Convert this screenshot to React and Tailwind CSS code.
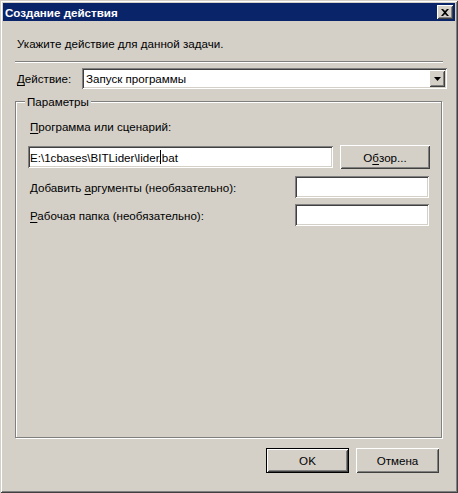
import React from 'react'

const raised =
  'bg-[#d4d0c8] shadow-[inset_1px_1px_0_#ffffff,inset_-1px_-1px_0_#404040,inset_2px_2px_0_#d4d0c8,inset_-2px_-2px_0_#808080]'
const sunken =
  'bg-white shadow-[inset_1px_1px_0_#808080,inset_-1px_-1px_0_#ffffff,inset_2px_2px_0_#404040,inset_-2px_-2px_0_#d4d0c8]'

function U({ children }) {
  return <span className="underline underline-offset-[2px] decoration-1">{children}</span>
}

function Field({ className = '', children }) {
  return <div className={`${sunken} h-[22px] flex items-center px-[3px] ${className}`}>{children}</div>
}

function Button({ children, isDefault, className = '' }) {
  return (
    <div
      className={`${className} flex items-center justify-center ${
        isDefault ? 'border border-black' : ''
      }`}
    >
      <div className={`${raised} w-full h-full flex items-center justify-center`}>{children}</div>
    </div>
  )
}

export default function App() {
  return (
    <div
      className="w-[458px] h-[493px] bg-[#d4d0c8] p-[3px] text-[11.6px] leading-[15px] text-black shadow-[inset_1px_1px_0_#d4d0c8,inset_-1px_-1px_0_#404040,inset_2px_2px_0_#ffffff,inset_-2px_-2px_0_#808080]"
      style={{ fontFamily: '"Liberation Sans", Arial, sans-serif' }}
    >
      {/* title bar */}
      <div className="h-[18px] bg-[#0a246a] flex items-center justify-between pl-[2px] pr-[2px]">
        <span className="text-white font-bold text-[11.6px]">Создание действия</span>
        <div className={`${raised} w-[16px] h-[14px] flex items-center justify-center`}>
          <svg width="8" height="7" viewBox="0 0 8 7">
            <path d="M0 0h2l2 2 2-2h2L5 3.5 8 7H6L4 5 2 7H0l3-3.5z" fill="#000" />
          </svg>
        </div>
      </div>

      <div className="px-[12px]">
        <div className="mt-[15px] pl-[2px]">Укажите действие для данной задачи.</div>
        <div className="mt-[10px] h-[2px] border-t border-[#808080] border-b-white" style={{ borderBottomWidth: 1 }} />

        {/* action row */}
        <div className="mt-[5px] flex items-center -mr-[4px]">
          <div className="w-[67px] pl-[2px]">
            <U>Д</U>ействие:
          </div>
          <div className={`${sunken} flex-1 h-[21px] flex items-center pl-[4px] pr-[2px]`}>
            <span className="flex-1">Запуск программы</span>
            <div className={`${raised} w-[16px] h-[17px] flex items-center justify-center`}>
              <svg width="7" height="4" viewBox="0 0 7 4">
                <path d="M0 0h7L3.5 4z" fill="#000" />
              </svg>
            </div>
          </div>
        </div>

        {/* parameters group */}
        <div className="relative mt-[12px] h-[337px] border border-[#808080] shadow-[inset_1px_1px_0_#ffffff,1px_1px_0_#ffffff] mr-[1px]">
          <span className="absolute left-[9px] -top-[8px] bg-[#d4d0c8] px-[2px]">Параметры</span>
          <div className="pt-[17px] pl-[12px] pr-[11px]">
            <div className="pl-[2px]">
              <U>П</U>рограмма или сценарий:
            </div>
            <div className="mt-[11px] flex items-center gap-[7px]">
              <Field className="w-[305px] h-[21px] pl-[2px]">
                <span className="whitespace-pre">E:\1cbases\BITLider\lider</span>
                <span className="inline-block w-px h-[14px] bg-black -mr-[2px]" />
                <span>.bat</span>
              </Field>
              <Button className="w-[90px] h-[24px]">
                О<U>б</U>зор...
              </Button>
            </div>
            <div className="mt-[7px] flex items-center justify-between pr-[1px]">
              <div className="pl-[2px]">
                Добавить <U>а</U>ргументы (необязательно):
              </div>
              <Field className="w-[134px]" />
            </div>
            <div className="mt-[6px] flex items-center justify-between pr-[1px]">
              <div className="pl-[2px]">
                <U>Р</U>абочая папка (необязательно):
              </div>
              <Field className="w-[134px]" />
            </div>
          </div>
        </div>
      </div>

      {/* footer buttons */}
      <div className="mt-[10px] flex justify-end gap-[7px] pr-[16px]">
        <Button isDefault className="w-[83px] h-[25px]">
          OK
        </Button>
        <Button className="w-[83px] h-[25px]">Отмена</Button>
      </div>
    </div>
  )
}
